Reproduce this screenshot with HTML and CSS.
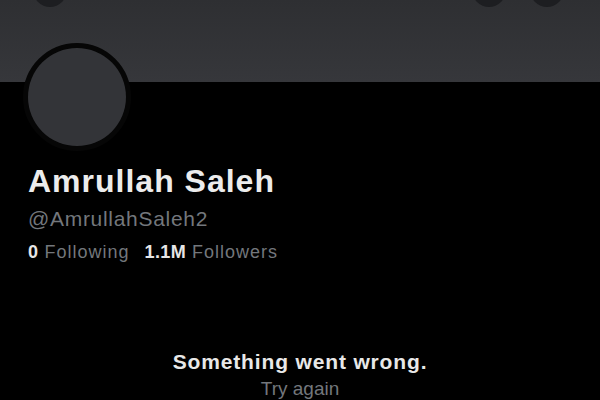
FILE: index.html
```html
<!DOCTYPE html>
<html lang="en">
<head>
<meta charset="utf-8">
<title>Amrullah Saleh</title>
<link rel="stylesheet" href="styles.css">
</head>
<body>
<div class="page">
  <header class="banner">
    <span class="btn btn-back"></span>
    <span class="btn btn-search"></span>
    <span class="btn btn-more"></span>
  </header>
  <section class="profile">
    <div class="avatar"><div class="avatar-inner"></div></div>
    <h1 class="name">Amrullah Saleh</h1>
    <div class="handle">@AmrullahSaleh2</div>
    <div class="stats">
      <span class="stat"><b>0</b> Following</span>
      <span class="stat"><b>1.1M</b> Followers</span>
    </div>
  </section>
  <section class="error">
    <div class="error-title">Something went wrong.</div>
    <div class="error-retry">Try again</div>
  </section>
</div>
</body>
</html>
```

FILE: styles.css
```css
html, body {
  margin: 0;
  padding: 0;
  background: #000;
}
.page {
  width: 600px;
  height: 400px;
  overflow: hidden;
  background: #000;
  font-family: "Liberation Sans", Arial, sans-serif;
}
.banner {
  position: relative;
  height: 82px;
  background: linear-gradient(#2e2f32, #36373b);
}
.btn {
  position: absolute;
  top: -27px;
  width: 34px;
  height: 34px;
  border-radius: 50%;
  background: #1d1e21;
}
.btn-back { left: 33px; }
.btn-search { left: 472px; }
.btn-more { left: 530px; }
.profile {
  padding-left: 28px;
}
.avatar {
  position: relative;
  z-index: 1;
  width: 98px;
  height: 98px;
  margin-top: -39px;
  margin-left: -5px;
  border: 5px solid #060606;
  border-radius: 50%;
  background: #060606;
}
.avatar-inner {
  width: 98px;
  height: 98px;
  border-radius: 50%;
  background: #333438;
}
.name {
  margin: 11px 0 0;
  font-size: 32px;
  line-height: 38px;
  font-weight: 700;
  letter-spacing: 1px;
  color: #ececec;
}
.handle {
  margin-top: 7px;
  font-size: 21px;
  line-height: 24px;
  letter-spacing: 0.7px;
  color: #73777c;
}
.stats {
  display: flex;
  gap: 15px;
  margin-top: 10px;
  font-size: 18px;
  line-height: 22px;
  letter-spacing: 1px;
  color: #73777c;
}
.stat b {
  color: #e6e6e6;
  font-weight: 700;
  letter-spacing: 0.4px;
}
.error {
  margin-top: 86px;
  text-align: center;
}
.error-title {
  font-size: 21px;
  line-height: 26px;
  font-weight: 700;
  letter-spacing: 0.85px;
  color: #e8e8e8;
}
.error-retry {
  margin-top: 3px;
  font-size: 19px;
  line-height: 22px;
  color: #73777c;
}
```
